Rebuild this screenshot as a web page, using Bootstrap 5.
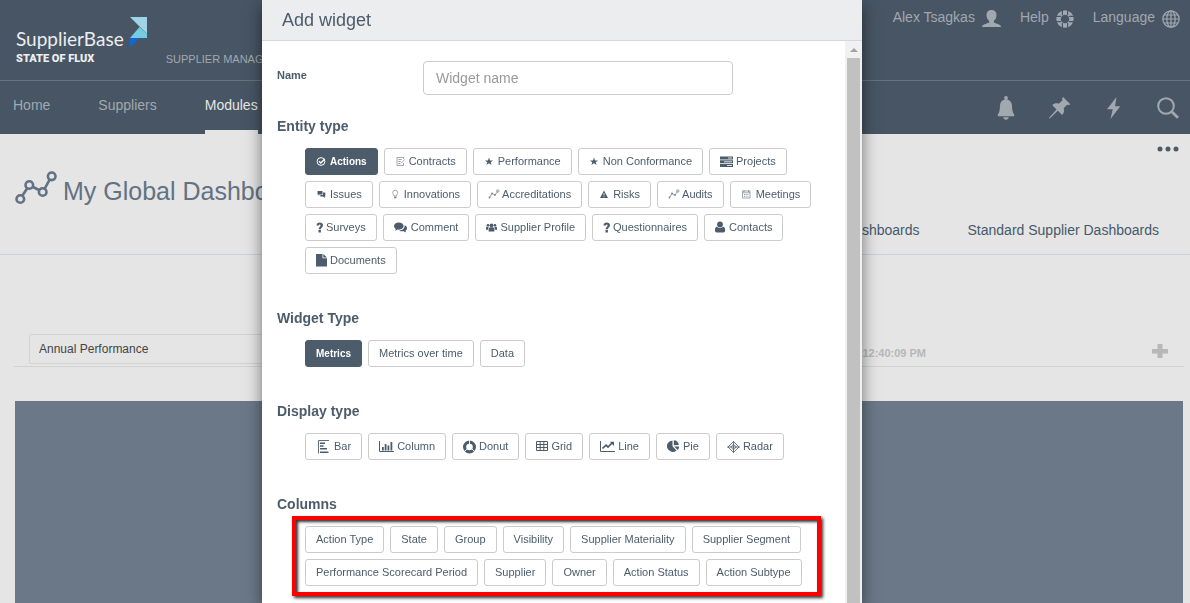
<!DOCTYPE html>
<html lang="en">
<head>
<meta charset="utf-8">
<meta name="viewport" content="width=device-width, initial-scale=1">
<title>SupplierBase – Add widget</title>
<link href="https://cdn.jsdelivr.net/npm/bootstrap@5.3.0/dist/css/bootstrap.min.css" rel="stylesheet">
<style>
  :root { --slate:#4c5c6b; --bar:#475564; --bar-text:#a1a8af; --page:#e5e5e5; }
  body { font-family:"Liberation Sans",Arial,sans-serif; font-size:14px; line-height:20px; background:var(--page); color:var(--slate); overflow:hidden; }
  svg { flex:none; fill:currentColor; }
  a { color:inherit; text-decoration:none; }
  .site-header { background:var(--bar); color:var(--bar-text); }
  .brand-bar { height:81px; border-bottom:1px solid #65737f; padding:0 10px 0 16px; }
  .brand-name { font:19px/24px Lato,sans-serif; color:#eceef0; }
  .brand-sub { font:900 11px/16px Roboto,sans-serif; color:#eceef0; }
  .brand-text { padding-top:27px; }
  .brand-mark { margin:17px 0 0 6px; }
  .brand-product { font-size:11px; padding:49px 0 0 19px; }
  .user-menu { gap:19px; padding-top:7px; }
  .user-menu a { gap:7px; }
  .user-menu svg { margin-top:3px; }
  .main-nav { height:53px; padding:0 11px 0 13px; }
  .main-links { gap:48px; }
  .main-links a { padding-top:14px; }
  .main-links .active { color:#e5e5e5; border-bottom:4px solid var(--page); }
  .tool-links { gap:32px; }
  .page-head { border-bottom:1px solid #c9d2d9; }
  .page-menu { height:30px; padding:0 11px; }
  .page-title { height:52px; padding-left:15px; gap:6px; color:#627282; }
  .page-title h1 { font-size:25px; line-height:30px; font-weight:400; margin:0; padding-top:2px; }
  .page-tabs { gap:48px; padding:4px 31px 14px 0; color:#46596a; }
  .widget-bar { margin:79px 6px 34px 14px; padding:0 16px 2px 15px; border-bottom:1px solid #d2d2d2; }
  .widget-name { width:320px; height:30px; padding:0 9px; font-size:12px; color:#444; background:transparent; border:1px solid #d2d2d2; border-radius:2px; }
  .widget-time { margin-right:226px; font-size:11px; font-weight:700; color:#b7b7b7; padding-top:8px; }
  .widget-add { color:#b7b7b7; padding-top:4px; }
  .widget-tile { margin:0 7px 0 15px; background:#6a7888; }
  .btn-plain { border:0; background:none; padding:0; color:inherit; display:flex; }
  .btn-plain.widget-add { color:#b7b7b7; padding-top:4px; }

  .overlay { padding-right:66px; overflow:hidden; }
  .panel { width:600px; background:#fff; box-shadow:0 5px 15px rgba(0,0,0,.5); }
  .panel-head { background:#ecedef; border-bottom:1px solid #d5d8db; padding:10px 20px; }
  .panel-head h2 { font-size:18px; line-height:20px; font-weight:400; margin:0; }
  .panel-body { padding:20px 24px 0 15px; min-width:0; }
  .name-row { margin-bottom:21px; }
  .name-row label { width:146px; font-size:11px; font-weight:700; line-height:28px; }
  .name-row input { width:310px; height:34px; padding:6px 12px; font-size:14px; border:1px solid #ccc; border-radius:4px; }
  .name-row input::placeholder { color:#999; opacity:1; }
  .group-title { font-size:14px; line-height:20px; font-weight:700; margin:0; }
  .choice-group { margin-bottom:34px; }
  .choices { display:flex; flex-wrap:wrap; gap:6px; padding:12px 0 0 28px; }
  .choice { display:flex; align-items:center; height:27px; padding:0 10px; font-size:11px; line-height:17px; color:var(--slate); background:#fff; border:1px solid #ccc; border-radius:3px; }
  .choice.active { background:var(--slate); border-color:var(--slate); color:#fff; font-size:10px; font-weight:700; }
  .choice svg { height:14px; }
  .choice .faint { opacity:.75; }
  .marked { margin:2px 0 0 15px; padding:6px 9px; border:4px solid #f00; box-shadow:2px 2px 3px rgba(0,0,0,.8), inset 2px 2px 3px rgba(0,0,0,.8); }
  .scroll-track { width:17px; flex:none; background:#f1f1f1; padding:0 2px; }
  .scroll-arrow { height:17px; color:#a3a3a3; }
  .scroll-thumb { background:#c1c1c1; }
</style>
</head>
<body>
<svg width="0" height="0" class="position-absolute" aria-hidden="true">
  <symbol id="star" viewBox="0 0 14 14"><path d="M5 2.500l1 2.900h3L6.700 7.200 7.600 10 5 8.300 2.400 10l.9-2.800L1 5.400h3z"/></symbol>
  <symbol id="trend" viewBox="0 0 14 14"><path d="M1.500 9.500L4 5.500 7 7 9.500 3.500" fill="none" stroke="currentColor" stroke-width=".8"/><circle cx="1.500" cy="9.500" r=".9"/><circle cx="4" cy="5.500" r=".9"/><circle cx="7" cy="7" r=".9"/><circle cx="9.800" cy="3" r="1.200" fill="none" stroke="currentColor" stroke-width=".8"/></symbol>
  <symbol id="question" viewBox="0 0 10 14"><path d="M.5 4.500C.5 2.500 1.900 1.500 3.700 1.500c1.900 0 3.300 1 3.300 2.800 0 2.300-2.200 2.400-2.200 3.900H2.600c0-2.300 2-2.600 2-3.800 0-.6-.3-.9-.9-.9s-.9.400-.9 1zM2.500 9h2.400v2.400H2.500z"/></symbol>
</svg>

<div class="d-flex flex-column vh-100">
  <header class="site-header">
    <div class="brand-bar d-flex align-items-start">
      <a href="#" class="d-flex" aria-label="SupplierBase home">
        <span class="brand-text"><span class="brand-name d-block">SupplierBase</span><span class="brand-sub d-block">STATE OF FLUX</span></span>
        <svg class="brand-mark" width="17" height="31" viewBox="0 0 17 31"><path fill="#9fd3e6" d="M0 0h17v17z"/><path fill="#73cbe4" d="M9.500 10L17 17v4H0z"/><path fill="#1766cf" d="M0 21h10L0 30z"/></svg>
      </a>
      <span class="brand-product text-nowrap">SUPPLIER MANAGEMENT</span>
      <nav class="user-menu d-flex ms-auto" aria-label="Account">
        <a href="#" class="d-flex">Alex Tsagkas
          <svg width="19" height="18" viewBox="0 0 19 18"><path d="M9.500 0c3 0 5 1.800 5 4.800 0 2.600-1 5-2.700 6.200v1.500l5.200 2c1.200.5 2 1.300 2 2.500H0c0-1.200.8-2 2-2.500l5.200-2V11C5.500 9.800 4.500 7.400 4.500 4.800c0-3 2-4.800 5-4.800z"/></svg></a>
        <a href="#" class="d-flex">Help
          <svg width="18" height="18" viewBox="0 0 18 18"><circle cx="9" cy="9" r="6.500" fill="none" stroke="currentColor" stroke-width="4.400"/><path d="M6.400 0v5M11.600 0v5M6.400 13v5M11.600 13v5M0 6.400h5M0 11.600h5M13 6.400h5M13 11.600h5" stroke="#475564" stroke-width="1.200"/></svg></a>
        <a href="#" class="d-flex">Language
          <svg width="18" height="18" viewBox="0 0 18 18"><g fill="none" stroke="currentColor" stroke-width="1.200"><circle cx="9" cy="9" r="8.200"/><ellipse cx="9" cy="9" rx="4.200" ry="8.200"/><path d="M9 1v16M1 9h16M2 5h14M2 13h14"/></g></svg></a>
      </nav>
    </div>
    <div class="main-nav d-flex justify-content-between">
      <nav class="main-links d-flex" aria-label="Main"><a href="#">Home</a><a href="#">Suppliers</a><a href="#" class="active">Modules</a></nav>
      <div class="tool-links d-flex align-items-center">
        <button class="btn-plain" aria-label="Notifications"><svg width="22" height="24" viewBox="0 0 22 24"><circle cx="11" cy="2" r="1.900"/><path d="M11 3.500c3.800 0 5.800 2.600 6 6.500.2 4 .5 6.500 2.200 8.500v1.800H2.800v-1.800C4.500 16.500 4.800 14 5 10c.2-3.900 2.200-6.500 6-6.500zM8.200 21.300h5.600c-.3 1.500-1.300 2.500-2.800 2.500s-2.500-1-2.800-2.500z"/></svg></button>
        <button class="btn-plain" aria-label="Pinned"><svg width="22" height="22" viewBox="0 0 22 22"><path d="M14 0l7.300 7.300c-1 .9-2.200.9-3.200.4l-3.400 3.600c.9 2.600.2 5-1.500 6.700l-4.400-4.300L1 21.300l-1 .2.300-1L7.500 12.500 3.300 8.200c1.700-1.600 4-2.300 6.500-1.500L13.500 3.200C13 2 13 1 14 0z"/></svg></button>
        <button class="btn-plain" aria-label="Quick actions"><svg width="22" height="22" viewBox="0 0 22 22"><path d="M13.500 0L4 12.200h5.700L7.500 22 17.300 9.200h-5.300z"/></svg></button>
        <button class="btn-plain" aria-label="Search"><svg width="22" height="22" viewBox="0 0 22 22"><g fill="none" stroke="currentColor"><circle cx="9" cy="9" r="7.800" stroke-width="2"/><path d="M14.500 14.500l6.500 6.300" stroke-width="2.800"/></g></svg></button>
      </div>
    </div>
  </header>

  <section class="page-head">
    <div class="page-menu d-flex align-items-center justify-content-end"><button class="btn-plain" aria-label="More options"><svg width="22" height="6" viewBox="0 0 22 6"><circle cx="3" cy="3" r="2.500"/><circle cx="11" cy="3" r="2.500"/><circle cx="19" cy="3" r="2.500"/></svg></button></div>
    <div class="page-title d-flex align-items-center">
      <svg width="42" height="38" viewBox="0 0 42 38"><g fill="none" stroke="currentColor" stroke-width="2.600"><circle cx="5.300" cy="28" r="3.800"/><circle cx="14.300" cy="14" r="3.800"/><circle cx="27.700" cy="21" r="3.800"/><circle cx="36.700" cy="5.300" r="3.800"/><path d="M7.500 24.500l4.600-7M18 16l6 3M29.800 17.500l4.700-8.600"/></g></svg>
      <h1>My Global Dashboard</h1>
    </div>
    <nav class="page-tabs d-flex justify-content-end" aria-label="Dashboards"><a href="#">Dashboards</a><a href="#">Standard Supplier Dashboards</a></nav>
  </section>

  <div class="widget-bar d-flex align-items-center">
    <input class="widget-name" type="text" value="Annual Performance" aria-label="Widget title">
    <div class="widget-time ms-auto">12:40:09 PM</div>
    <button class="btn-plain widget-add" aria-label="Add"><svg width="16" height="16" viewBox="0 0 16 16"><path d="M5.500 1h5v5H16v4.500h-5.500V15h-5v-4.500H0V6h5.500z"/></svg></button>
  </div>
  <div class="widget-tile flex-grow-1"></div>
</div>

<div class="overlay position-fixed top-0 start-0 w-100 h-100 d-flex justify-content-center">
  <div class="panel d-flex flex-column" role="dialog" aria-labelledby="dialog-title">
    <div class="panel-head"><h2 id="dialog-title">Add widget</h2></div>
    <div class="d-flex flex-grow-1">
      <form class="panel-body flex-grow-1">
        <div class="name-row d-flex"><label for="widget-name">Name</label><input id="widget-name" type="text" placeholder="Widget name"></div>

        <section class="choice-group">
          <h3 class="group-title">Entity type</h3>
          <div class="choices">
            <button type="button" class="choice active"><svg width="14" viewBox="0 0 14 14"><circle cx="5" cy="6.500" r="3.900" fill="none" stroke="currentColor"/><path d="M3 6.300l1.800 1.800L8.800 4" fill="none" stroke="currentColor" stroke-width="1.400"/></svg>Actions</button>
            <button type="button" class="choice"><svg class="faint" width="14" viewBox="0 0 14 14"><path d="M8.500 8v2.500H2V2.500h6.500V4M3.300 4.500h3.500M3.300 6.500h2.500M3.300 8.500h2M6 8.300L9.800 4.500" fill="none" stroke="currentColor" stroke-width=".7"/></svg>Contracts</button>
            <button type="button" class="choice"><svg width="14"><use href="#star"/></svg>Performance</button>
            <button type="button" class="choice"><svg width="14"><use href="#star"/></svg>Non Conformance</button>
            <button type="button" class="choice"><svg width="16" viewBox="0 0 16 14"><path d="M0 1.500h13v3H0zM0 5.300h13v3H0zM0 9h13v3H0z"/><path d="M8 3h4M4 6.800h8M7 10.500h5" stroke="#fff" stroke-width=".8"/></svg>Projects</button>
            <button type="button" class="choice"><svg width="14" viewBox="0 0 14 14"><path d="M1.500 3h5v3.500H3.500L2.500 7.700V6.500h-1z"/><path d="M7 4.500H9.300V8.500H8.700V10L7 8.500H4.300V7H7z"/></svg>Issues</button>
            <button type="button" class="choice"><svg class="faint" width="14" viewBox="0 0 14 14"><path d="M4 8C4 6.700 2.700 6.300 2.700 4.700a2.500 2.500 0 0 1 5 0C7.700 6.300 6.400 6.700 6.400 8z" fill="none" stroke="currentColor" stroke-width=".7"/><path d="M4 8.600h2.400v1.700H4z"/></svg>Innovations</button>
            <button type="button" class="choice"><svg class="faint" width="14"><use href="#trend"/></svg>Accreditations</button>
            <button type="button" class="choice"><svg width="14" viewBox="0 0 14 14"><path d="M5 2.500l4 7.500H1z"/><path d="M5 5v2.500M5 8.300v.9" stroke="#fff" stroke-width=".8"/></svg>Risks</button>
            <button type="button" class="choice"><svg class="faint" width="14"><use href="#trend"/></svg>Audits</button>
            <button type="button" class="choice"><svg class="faint" width="15" viewBox="0 0 15 14"><path d="M1.500 3h7.500v7H1.500zM1.500 4.800H9M3 2v2M7.500 2v2" fill="none" stroke="currentColor" stroke-width=".7"/><path d="M3 6.500h5M3 8.300h5" stroke="currentColor" stroke-width=".8" stroke-dasharray="1 .7"/></svg>Meetings</button>
            <button type="button" class="choice"><svg width="10"><use href="#question"/></svg>Surveys</button>
            <button type="button" class="choice"><svg width="17" viewBox="0 0 17 14"><path d="M4.800 1.500c2.700 0 4.800 1.500 4.800 3.600S7.500 8.700 4.800 8.700c-.5 0-.9 0-1.300-.1-.8.600-1.600.9-2.600 1 .5-.5.8-1 .9-1.600C.7 7.300 0 6.300 0 5.100c0-2.100 2.100-3.600 4.800-3.600z"/><path d="M10.600 4.200c1.500.6 2.400 1.700 2.400 3 0 1-.6 1.900-1.600 2.600.1.600.4 1 .9 1.500-1 0-1.900-.4-2.600-1-1.800.2-3.400-.1-4.500-.9 3.200 0 5.700-2 5.400-5.200z"/></svg>Comment</button>
            <button type="button" class="choice"><svg width="14" viewBox="0 0 14 14"><circle cx="5.500" cy="4.300" r="1.900"/><circle cx="2" cy="4.300" r="1.300"/><circle cx="9" cy="4.300" r="1.300"/><path d="M2.600 10.500V8c0-1 .8-1.700 1.700-1.700h2.400c.9 0 1.700.7 1.700 1.700v2.500zM0 8.800V7c0-.8.500-1.200 1.200-1.200H3C2.200 6.500 2 7.300 2 8.800zM11 8.800V7c0-.8-.5-1.200-1.200-1.200H8c.8.700 1 1.500 1 3z"/></svg>Supplier Profile</button>
            <button type="button" class="choice"><svg width="10"><use href="#question"/></svg>Questionnaires</button>
            <button type="button" class="choice"><svg width="14" viewBox="0 0 14 14"><circle cx="5" cy="3.500" r="2.900"/><path d="M2 5.700c1.800 1.600 4.200 1.600 6 0 1.500.2 2.200 1.500 2.200 3.500 0 1.500-.7 2.200-1.900 2.200H1.900C.7 11.400 0 10.700 0 9.200 0 7.200.5 5.900 2 5.700z"/></svg>Contacts</button>
            <button type="button" class="choice"><svg width="14" viewBox="0 0 14 14"><path d="M0 0h6.500v4.200H11V12.500H0zM7.300 0L11 3.500H7.300z"/></svg>Documents</button>
          </div>
        </section>

        <section class="choice-group">
          <h3 class="group-title">Widget Type</h3>
          <div class="choices">
            <button type="button" class="choice active">Metrics</button>
            <button type="button" class="choice">Metrics over time</button>
            <button type="button" class="choice">Data</button>
          </div>
        </section>

        <section class="choice-group">
          <h3 class="group-title">Display type</h3>
          <div class="choices">
            <button type="button" class="choice"><svg width="18" viewBox="0 0 18 14"><path d="M2.500 13.500V.5H13" fill="none" stroke="currentColor" stroke-width=".9"/><path d="M4 2.500h5V4H4zM4 5.300h3.500v1.500H4zM4 8h7v1.500H4zM4 11.500h8.500V13H4z"/></svg>Bar</button>
            <button type="button" class="choice"><svg width="18" viewBox="0 0 18 14"><path d="M.5 1v10.500H15" fill="none" stroke="currentColor"/><path d="M3 7h1.800v3.500H3zM5.700 4h1.800v6.500H5.700zM8.500 5.500h1.800v5H8.500zM11.500 2h1.800v8.500h-1.800z"/></svg>Column</button>
            <button type="button" class="choice"><svg width="16" viewBox="0 0 16 14"><circle cx="6.500" cy="7" r="4.900" fill="none" stroke="currentColor" stroke-width="3.200"/><path d="M6.500 0v4M1 12l3-3M12 12L9 9" stroke="#fff" stroke-width=".9"/></svg>Donut</button>
            <button type="button" class="choice"><svg width="15" viewBox="0 0 15 14"><path d="M.5 1.500h11v9H.5zM.5 4.500h11M.5 7.500h11M4.200 1.500v9M7.800 1.500v9" fill="none" stroke="currentColor"/></svg>Grid</button>
            <button type="button" class="choice"><svg width="18" viewBox="0 0 18 14"><path d="M.5 1v10.500H15" fill="none" stroke="currentColor"/><path d="M2.500 8.500l3.500-3.300 2 1.800 4-4" fill="none" stroke="currentColor" stroke-width="1.700"/><path d="M9.800 1.800H14V6z"/></svg>Line</button>
            <button type="button" class="choice"><svg width="16" viewBox="0 0 16 14"><path d="M5.500.5v5.700l4 4.200A5.700 5.700 0 1 1 5.500.5z"/><path d="M6.800.2c2.700 0 4.800 2 5 4.700l-5 .4z"/><path d="M7.200 6.500h4.900c0 1.300-.5 2.400-1.400 3.400z"/></svg>Pie</button>
            <button type="button" class="choice"><svg width="16" viewBox="0 0 16 14"><g fill="none" stroke="currentColor" stroke-width=".8"><path d="M6.500 1.500L12 7l-5.500 5.500L1 7zM6.500 4.200L9.300 7l-2.800 2.800L3.700 7zM6.500 1v12M0 7h13"/></g></svg>Radar</button>
          </div>
        </section>

        <section>
          <h3 class="group-title">Columns</h3>
          <div class="choices marked">
            <button type="button" class="choice">Action Type</button>
            <button type="button" class="choice">State</button>
            <button type="button" class="choice">Group</button>
            <button type="button" class="choice">Visibility</button>
            <button type="button" class="choice">Supplier Materiality</button>
            <button type="button" class="choice">Supplier Segment</button>
            <button type="button" class="choice">Performance Scorecard Period</button>
            <button type="button" class="choice">Supplier</button>
            <button type="button" class="choice">Owner</button>
            <button type="button" class="choice">Action Status</button>
            <button type="button" class="choice">Action Subtype</button>
          </div>
        </section>
      </form>
      <div class="scroll-track d-flex flex-column" aria-hidden="true">
        <div class="scroll-arrow d-flex align-items-center justify-content-center"><svg width="8" height="4" viewBox="0 0 8 4"><path d="M4 0l4 4H0z"/></svg></div>
        <div class="scroll-thumb flex-grow-1"></div>
      </div>
    </div>
  </div>
</div>
<script src="https://cdn.jsdelivr.net/npm/bootstrap@5.3.0/dist/js/bootstrap.bundle.min.js"></script>
</body>
</html>
